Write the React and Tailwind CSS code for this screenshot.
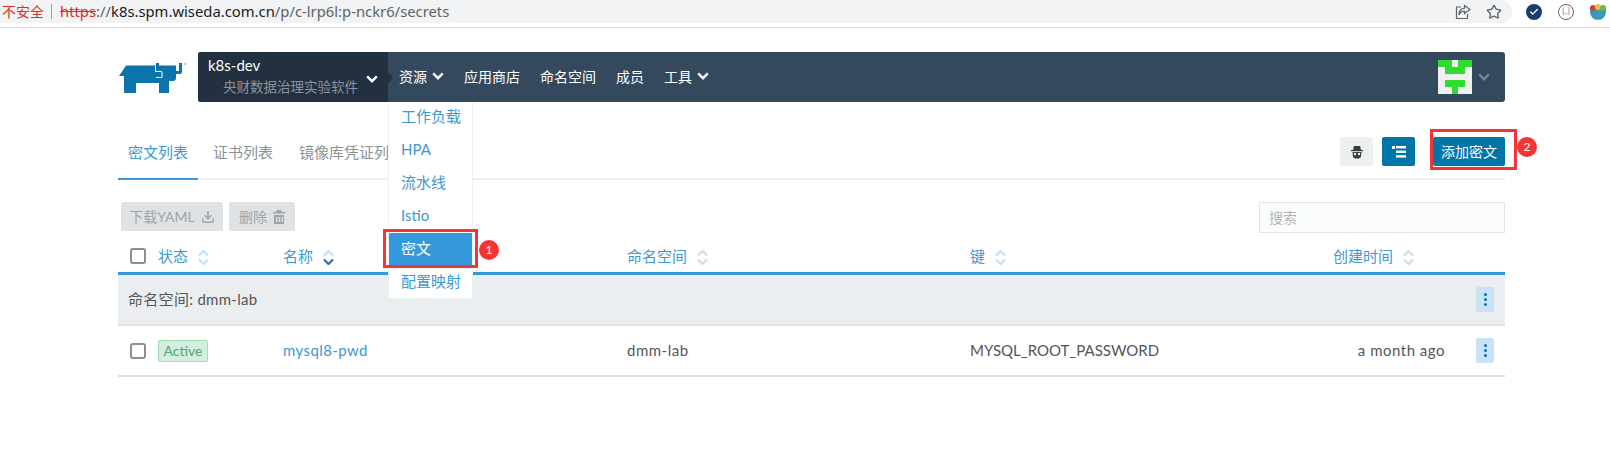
import React from "react";
import { Check, Download, Star } from "lucide-react";

const Chevron = ({ className }) => (
  <svg viewBox="0 0 12 8" className={className} fill="none" stroke="currentColor" strokeWidth="2.4">
    <path d="M1.2 1.4 6 6.2l4.8-4.8" />
  </svg>
);

const SortIcon = ({ active }) => (
  <svg viewBox="0 0 11 15" className="w-[11px] h-[15px] ml-[10px] mt-[2px] shrink-0" fill="none" strokeWidth="2.2">
    <path d="M1 5.5 5.5 1 10 5.5" stroke="#c6e0f5" />
    <path d="M1 9.5 5.5 14 10 9.5" stroke={active ? "#2f6ea8" : "#c6e0f5"} />
  </svg>
);

const Logo = () => (
  <svg viewBox="0 0 67 31" className="w-[67px] h-[31px]">
    <path fill="#0b75ab" d="M0 14 7 3.5H37V1h3v2.5H57V16a3 3 0 0 1-3 3H50V31H40V21H17V31H5V14H2Z" />
    <path fill="#0b75ab" d="M57 9h3V1h3v9a2 2 0 0 1-2 2h-4Z" />
    <path fill="none" stroke="#fff" strokeWidth="1" d="M36.500 4v5.500h6.500M43 10v5.500h-6" />
    <circle cx="66" cy="2" r="1" fill="#9bb7c6" />
  </svg>
);

const Avatar = () => {
  const rows = ["11011", "01110", "00000", "01110", "00100"];
  return (
    <div className="grid grid-cols-5 w-[34px] h-[34px]">
      {rows.join("").split("").map((c, i) => (
        <div key={i} className={c === "1" ? "bg-[#2fdc2f]" : "bg-[#f0f0f0]"} />
      ))}
    </div>
  );
};

const Kebab = () => (
  <div className="w-[18px] h-[25px] bg-[#c9e2f6] rounded-[2px] flex flex-col items-center justify-center gap-[2px]">
    <span className="w-[3px] h-[3px] rounded-full bg-[#0075a8]" />
    <span className="w-[3px] h-[3px] rounded-full bg-[#0075a8]" />
    <span className="w-[3px] h-[3px] rounded-full bg-[#0075a8]" />
  </div>
);

const Checkbox = () => (
  <div className="w-[16px] h-[16px] rounded-[3px] border-2 border-[#8e8e8e] bg-white" />
);

const RedBadge = ({ n, className }) => (
  <div className={`absolute w-[20px] h-[20px] rounded-full bg-[#f53535] text-white text-[12px] flex items-center justify-center ${className}`}>
    {n}
  </div>
);

const menu = ["工作负载", "HPA", "流水线", "Istio", "密文", "配置映射"];
const gridCols = "grid grid-cols-[28px_125px_344px_343px_300px_1fr_18px] items-center pl-[12px] pr-[11px]";

export default function App() {
  return (
    <div className="relative min-h-[463px] bg-white text-[15px] font-['Lato','Noto_Sans_CJK_SC',sans-serif] text-[#555]">
      {/* browser address bar */}
      <div className="h-[28px] border-b border-[#dedede] flex items-start">
        <div className="w-[1512px] h-[23px] bg-[#f1f3f4] rounded-r-[12px] flex items-center pl-[2px] pr-[10px] font-['Noto_Sans','Noto_Sans_CJK_SC',sans-serif] text-[14.8px]">
          <span className="text-[#d93025] text-[14px]">不安全</span>
          <span className="w-px h-[15px] bg-[#9aa0a6] ml-[7px] mr-[8px]" />
          <span className="text-[#d93025] line-through">https</span>
          <span className="text-[#5f6368]">://</span>
          <span className="text-[#202124]">k8s.spm.wiseda.com.cn</span>
          <span className="text-[#5f6368]">/p/c-lrp6l:p-nckr6/secrets</span>
          <div className="ml-auto flex items-center gap-[15px] text-[#5f6368]">
            <svg viewBox="0 0 16 16" className="w-[16px] h-[16px]" fill="none" stroke="currentColor" strokeWidth="1.2">
              <path d="M6 3H1.500v11.500h11V10" />
              <path d="M9.500 1.500 15 5.500 9.500 9.500V7.200C7 7.200 5 8.500 4 11c0-4 2-6.500 5.500-6.800Z" />
            </svg>
            <Star className="w-[16px] h-[16px]" strokeWidth={2} />
          </div>
        </div>
        <div className="flex-1 h-[23px] flex items-center pl-[14px] gap-[16px]">
          <div className="w-[16px] h-[16px] rounded-full bg-[#1b3d6d] flex items-center justify-center">
            <Check className="w-[10px] h-[10px] text-white" strokeWidth={3} />
          </div>
          <div className="w-[16px] h-[16px] rounded-full border border-[#5f6368] text-[7px] leading-none flex items-center justify-center text-[#5f6368]">
            {"{..}"}
          </div>
          <svg viewBox="0 0 16 16" className="w-[16px] h-[16px]">
            <path fill="#3a9bb8" d="M0 5h16v3a8 8 0 0 1-16 0Z" />
            <circle cx="3" cy="4" r="3" fill="#c0453f" />
            <circle cx="8" cy="3" r="3" fill="#f2c230" />
            <circle cx="13" cy="4" r="3" fill="#6bb64a" />
          </svg>
        </div>
      </div>

      <div className="relative ml-[118px] w-[1387px]">
        {/* top nav */}
        <div className="pt-[24px] flex items-start">
          <div className="w-[80px] pl-[1px] pt-[10px]">
            <Logo />
          </div>
          <div className="flex-1 h-[50px] flex bg-[#34495e] rounded-[3px] text-white text-[14px]">
            <div className="relative w-[190px] bg-[#22303f] rounded-l-[3px] pl-[10px] pt-[3px]">
              <div className="text-[15px] leading-[20px]">k8s-dev</div>
              <div className="pl-[15px] text-[#8a949c] text-[13.5px] leading-[22px] mt-[1px]">央财数据治理实验软件</div>
              <Chevron className="absolute right-[10px] top-[23px] w-[12px] h-[8px]" />
              <div className="absolute -right-[5px] top-[21px] border-y-[5px] border-l-[5px] border-y-transparent border-l-[#22303f]" />
            </div>
            <div className="flex items-center gap-[20px] pl-[11px] pb-[2px]">
              <div className="flex items-center gap-[5px]">
                资源
                <Chevron className="w-[12px] h-[8px]" />
              </div>
              <div>应用商店</div>
              <div>命名空间</div>
              <div>成员</div>
              <div className="flex items-center gap-[5px]">
                工具
                <Chevron className="w-[12px] h-[8px]" />
              </div>
            </div>
            <div className="ml-auto flex items-center pr-[15px] gap-[6px]">
              <Avatar />
              <Chevron className="w-[12px] h-[8px] text-[#6f8699]" />
            </div>
          </div>
        </div>

        {/* tabs */}
        <div className="h-[78px] flex items-end justify-between border-b-2 border-[#eceff1]">
          <div className="flex items-end -mb-[2px] text-[#8a9299]">
            <div className="w-[80px] h-[43px] leading-[30px] text-center text-[#3d98d3] border-b-2 border-[#3498db]">密文列表</div>
            <div className="ml-[5px] w-[80px] h-[43px] leading-[30px] text-center">证书列表</div>
            <div className="ml-[6px] px-[10px] h-[43px] leading-[30px]">镜像库凭证列表</div>
          </div>
          <div className="flex pb-[12px] text-[14px]">
            <div className="w-[33px] h-[29px] bg-[#edf0f1] rounded-[2px] flex items-center justify-center">
              <svg viewBox="0 0 14 14" className="w-[14px] h-[14px]" fill="#3c3c3c">
                <path d="M4 1h6l1 4H3Z" />
                <path d="M1 5h12v1.200H1Z" />
                <path d="M2.500 7h9l-.6 5.200L9 13.500H5l-1.900-1.300Z" />
                <circle cx="5" cy="9" r="1.200" fill="#edf0f1" />
                <circle cx="9" cy="9" r="1.200" fill="#edf0f1" />
              </svg>
            </div>
            <div className="ml-[9px] w-[33px] h-[29px] bg-[#0075a8] rounded-[2px] flex items-center justify-center">
              <svg viewBox="0 0 14 12" className="w-[14px] h-[12px]" fill="white">
                <rect x="0" y="0" width="3" height="3" />
                <rect x="4" y="0" width="10" height="2.400" />
                <rect x="4" y="4.600" width="10" height="2.400" />
                <rect x="4" y="9.200" width="10" height="2.400" />
              </svg>
            </div>
            <div className="ml-[18px] w-[72px] h-[29px] bg-[#0075a8] rounded-[2px] text-white flex items-center justify-center">添加密文</div>
          </div>
        </div>

        {/* bulk actions */}
        <div className="mt-[22px] flex items-start justify-between text-[14px] text-[#a0a4a8]">
          <div className="flex ml-[3px] gap-[6px]">
            <div className="w-[102px] h-[29px] bg-[#dfe2e5] rounded-[2px] flex items-center justify-center gap-[6px]">
              下载YAML
              <Download className="w-[14px] h-[14px]" strokeWidth={2.5} />
            </div>
            <div className="w-[66px] h-[29px] bg-[#dfe2e5] rounded-[2px] flex items-center justify-center gap-[6px]">
              删除
              <svg viewBox="0 0 12 14" className="w-[12px] h-[14px]" fill="currentColor">
                <path d="M4 0h4l1 2h3v1.600H0V2h3Z" />
                <path fillRule="evenodd" d="M1 5h10v9H1Zm2 2v5h1.400V7Zm2.800 0v5h1.400V7Zm2.800 0v5H10V7Z" />
              </svg>
            </div>
          </div>
          <div className="w-[246px] h-[31px] bg-[#fbfcfc] border border-[#dfe5e5] pl-[9px] flex items-center text-[#b5b5b5]">搜索</div>
        </div>

        {/* table */}
        <div className={`${gridCols} h-[42px] pt-[7px] text-[#3d98d3] border-b-[3px] border-[#3498db]`}>
          <Checkbox />
          <div className="flex items-center">状态<SortIcon /></div>
          <div className="flex items-center">名称<SortIcon active /></div>
          <div className="flex items-center">命名空间<SortIcon /></div>
          <div className="flex items-center">键<SortIcon /></div>
          <div className="flex items-center justify-end pr-[80px] col-span-2">创建时间<SortIcon /></div>
        </div>
        <div className="h-[51px] bg-[#ebeef0] border-b-2 border-[#dfe2e5] flex items-center justify-between pl-[10px] pr-[11px]">
          <span className="tracking-[0.3px]">命名空间: dmm-lab</span>
          <Kebab />
        </div>
        <div className={`${gridCols} h-[51px] border-b-2 border-[#dfdfdf]`}>
          <Checkbox />
          <div>
            <span className="block w-[50px] h-[22px] leading-[20px] text-center text-[14px] bg-[#d4eedd] border border-[#a8dcb9] rounded-[2px] text-[#4aa97a]">Active</span>
          </div>
          <div className="text-[#3d98d3] tracking-[0.4px]">mysql8-pwd</div>
          <div className="tracking-[0.5px]">dmm-lab</div>
          <div>MYSQL_ROOT_PASSWORD</div>
          <div className="text-right pr-[31px] tracking-[0.5px]">a month ago</div>
          <Kebab />
        </div>

        {/* resources dropdown */}
        <div className="absolute left-[270px] top-[74px] w-[85px] h-[197px] bg-white border-x border-b border-[#edf0f1] text-[#3d98d3]">
          <div className="-mt-px flex flex-col">
            {menu.map((m) => (
              <div
                key={m}
                className={`h-[33px] leading-[31px] pl-[12px] ${m === "密文" ? "bg-[#3498db] text-white" : ""}`}
              >
                {m}
              </div>
            ))}
          </div>
        </div>

        {/* annotations */}
        <div className="absolute left-[265px] top-[201px] w-[95px] h-[39px] border-[3px] border-[#f53535]" />
        <RedBadge n="1" className="left-[361px] top-[212px]" />
        <div className="absolute left-[1312px] top-[101px] w-[87px] h-[41px] border-[3px] border-[#f53535]" />
        <RedBadge n="2" className="left-[1399px] top-[109px]" />
      </div>
    </div>
  );
}
